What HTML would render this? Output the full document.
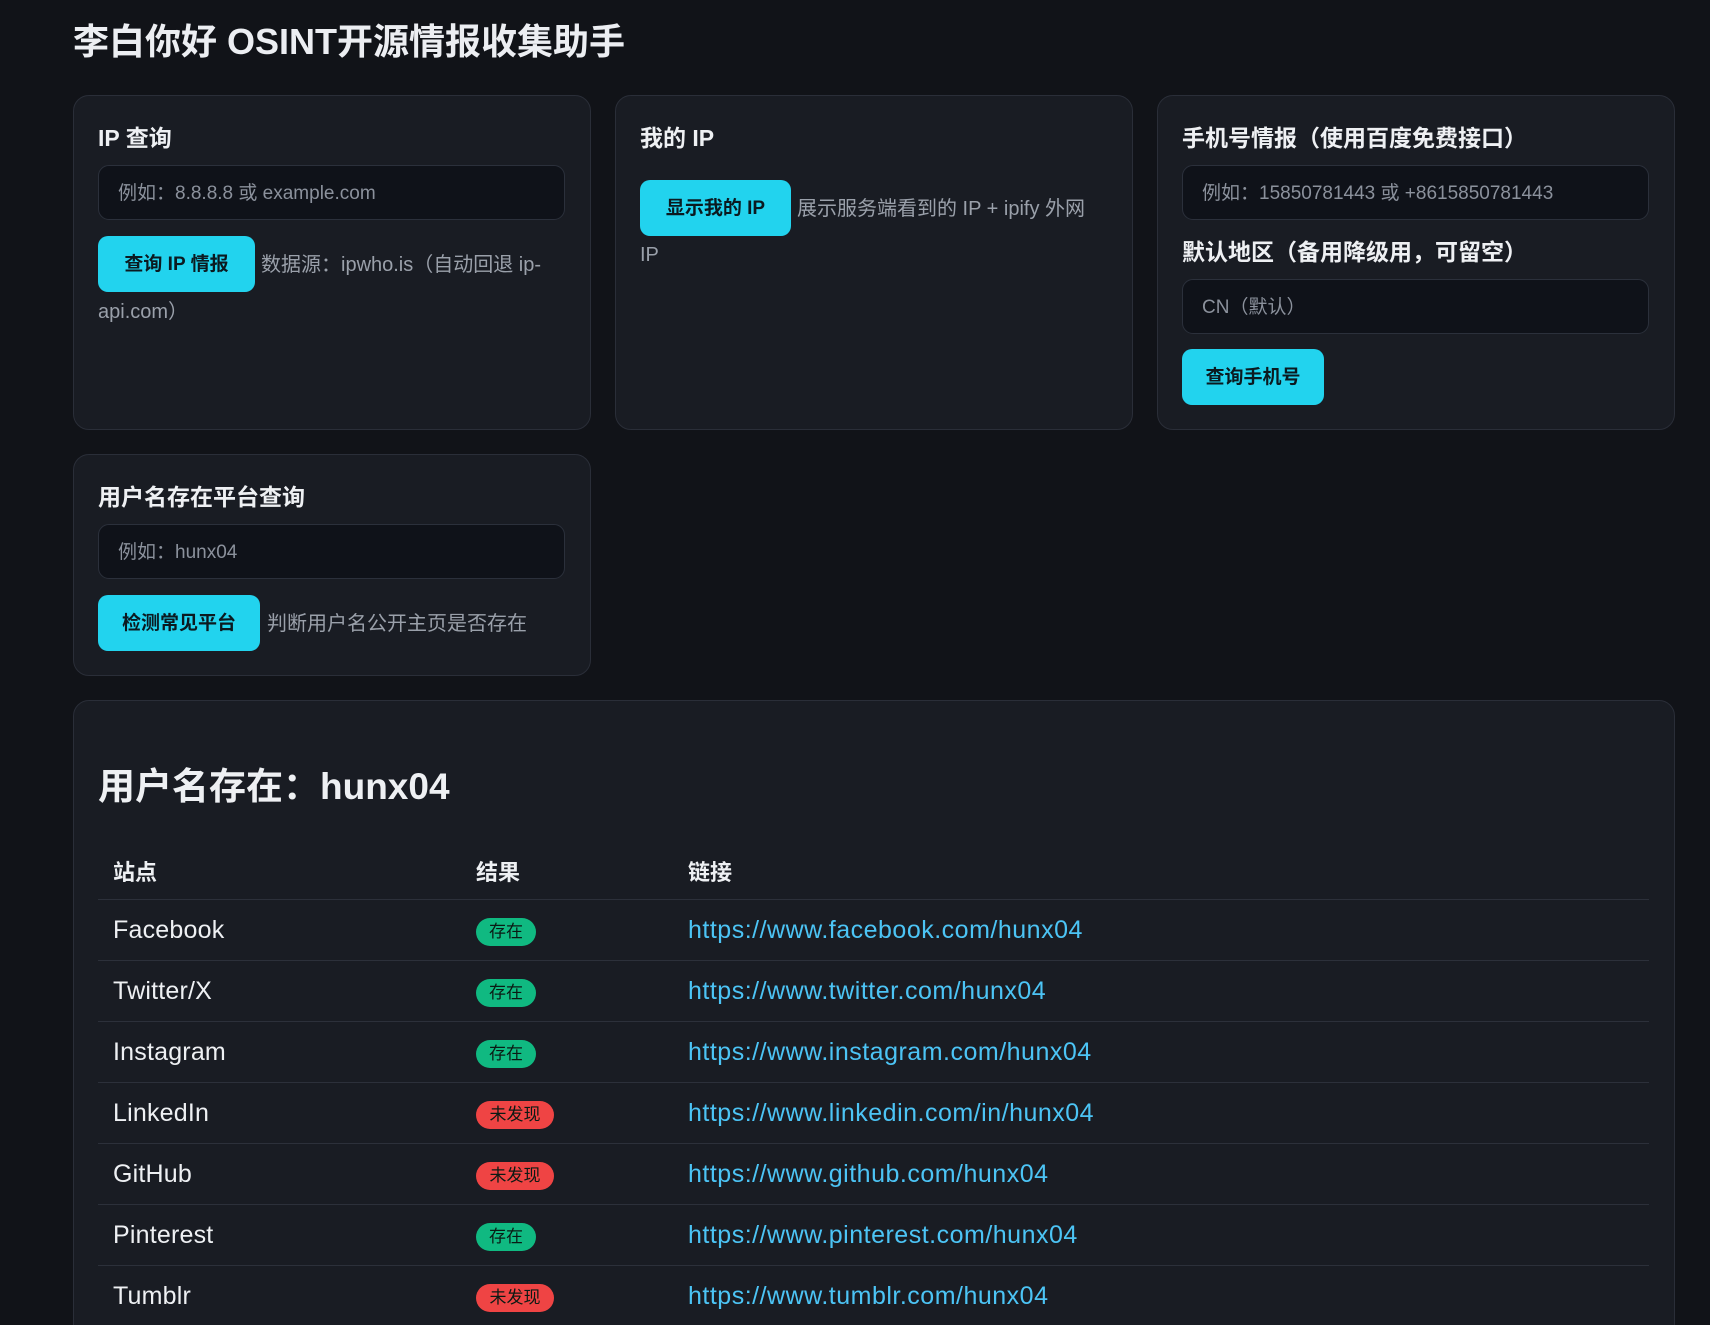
<!DOCTYPE html>
<html><head><meta charset="utf-8"><style>
*{box-sizing:border-box;margin:0;padding:0}
html{width:1710px;height:1325px;overflow:hidden}
body{width:1710px;height:1325px;overflow:hidden;background:#111318;color:#e5e7eb;font-family:"Liberation Sans","Noto Sans CJK SC",sans-serif;position:relative}
.a{position:absolute}
h1{position:absolute;left:73px;top:13px;font-size:36px;font-weight:700;color:#eceef2;white-space:nowrap}
.card{position:absolute;background:#191c23;border:1px solid #2a2e38;border-radius:16px}
.h{position:absolute;font-size:23px;font-weight:700;color:#eef0f3;white-space:nowrap;line-height:30px}
.in{position:absolute;background:#0f1219;border:1px solid #2b303b;border-radius:11px;height:55px;color:#8b919c;font-size:19px;line-height:55px;padding-left:19px;white-space:nowrap}
.btn{position:absolute;background:#22d3ee;border-radius:10px;height:56px;color:#0b1a20;font-size:19px;font-weight:700;text-align:center;line-height:58px;white-space:nowrap}
.t{position:absolute;color:#9aa0aa;font-size:20px;white-space:nowrap;line-height:30px}
.row{position:absolute;left:98px;width:1551px;height:61px;border-top:1px solid #2c303a}
.c1{position:absolute;left:15px;top:16px;font-size:25px;color:#eef0f3;letter-spacing:0.2px}
.b{position:absolute;left:378px;top:18px;height:28px;border-radius:14px;font-size:17px;line-height:28px;color:#0b1a14;text-align:center}
.ok{background:#10b981;width:60px}.no{background:#ef4444;width:78px}
.l{position:absolute;left:590px;top:16px;font-size:25px;color:#4cc4f5;letter-spacing:0.5px}
</style></head><body>
<h1>李白你好 OSINT开源情报收集助手</h1>

<div class="card" style="left:73px;top:95px;width:518px;height:335px"></div>
<div class="h" style="left:98px;top:123px">IP 查询</div>
<div class="in" style="left:98px;top:165px;width:467px">例如：8.8.8.8 或 example.com</div>
<div class="btn" style="left:98px;top:236px;width:157px">查询 IP 情报</div>
<div class="t" style="left:261px;top:250px">数据源：ipwho.is（自动回退 ip-</div>
<div class="t" style="left:98px;top:297px">api.com）</div>

<div class="card" style="left:615px;top:95px;width:518px;height:335px"></div>
<div class="h" style="left:640px;top:123px">我的 IP</div>
<div class="btn" style="left:640px;top:180px;width:151px">显示我的 IP</div>
<div class="t" style="left:797px;top:194px">展示服务端看到的 IP + ipify 外网</div>
<div class="t" style="left:640px;top:240px">IP</div>

<div class="card" style="left:1157px;top:95px;width:518px;height:335px"></div>
<div class="h" style="left:1182px;top:123px">手机号情报（使用百度免费接口）</div>
<div class="in" style="left:1182px;top:165px;width:467px">例如：15850781443 或 +8615850781443</div>
<div class="h" style="left:1182px;top:237px">默认地区（备用降级用，可留空）</div>
<div class="in" style="left:1182px;top:279px;width:467px">CN（默认）</div>
<div class="btn" style="left:1182px;top:349px;width:142px">查询手机号</div>

<div class="card" style="left:73px;top:454px;width:518px;height:222px"></div>
<div class="h" style="left:98px;top:482px">用户名存在平台查询</div>
<div class="in" style="left:98px;top:524px;width:467px">例如：hunx04</div>
<div class="btn" style="left:98px;top:595px;width:162px">检测常见平台</div>
<div class="t" style="left:267px;top:609px">判断用户名公开主页是否存在</div>

<div class="card" style="left:73px;top:700px;width:1602px;height:640px"></div>
<div class="a" style="left:98px;top:756px;font-size:37px;font-weight:700;color:#eef0f3;white-space:nowrap">用户名存在：hunx04</div>
<div class="a" style="left:113px;top:855px;font-size:22px;font-weight:700;color:#eef0f3">站点</div>
<div class="a" style="left:476px;top:855px;font-size:22px;font-weight:700;color:#eef0f3">结果</div>
<div class="a" style="left:688px;top:855px;font-size:22px;font-weight:700;color:#eef0f3">链接</div>

<div class="row" style="top:899px"><span class="c1">Facebook</span><span class="b ok">存在</span><span class="l">https://www.facebook.com/hunx04</span></div>
<div class="row" style="top:960px"><span class="c1">Twitter/X</span><span class="b ok">存在</span><span class="l">https://www.twitter.com/hunx04</span></div>
<div class="row" style="top:1021px"><span class="c1">Instagram</span><span class="b ok">存在</span><span class="l">https://www.instagram.com/hunx04</span></div>
<div class="row" style="top:1082px"><span class="c1">LinkedIn</span><span class="b no">未发现</span><span class="l">https://www.linkedin.com/in/hunx04</span></div>
<div class="row" style="top:1143px"><span class="c1">GitHub</span><span class="b no">未发现</span><span class="l">https://www.github.com/hunx04</span></div>
<div class="row" style="top:1204px"><span class="c1">Pinterest</span><span class="b ok">存在</span><span class="l">https://www.pinterest.com/hunx04</span></div>
<div class="row" style="top:1265px"><span class="c1">Tumblr</span><span class="b no">未发现</span><span class="l">https://www.tumblr.com/hunx04</span></div>
</body></html>
